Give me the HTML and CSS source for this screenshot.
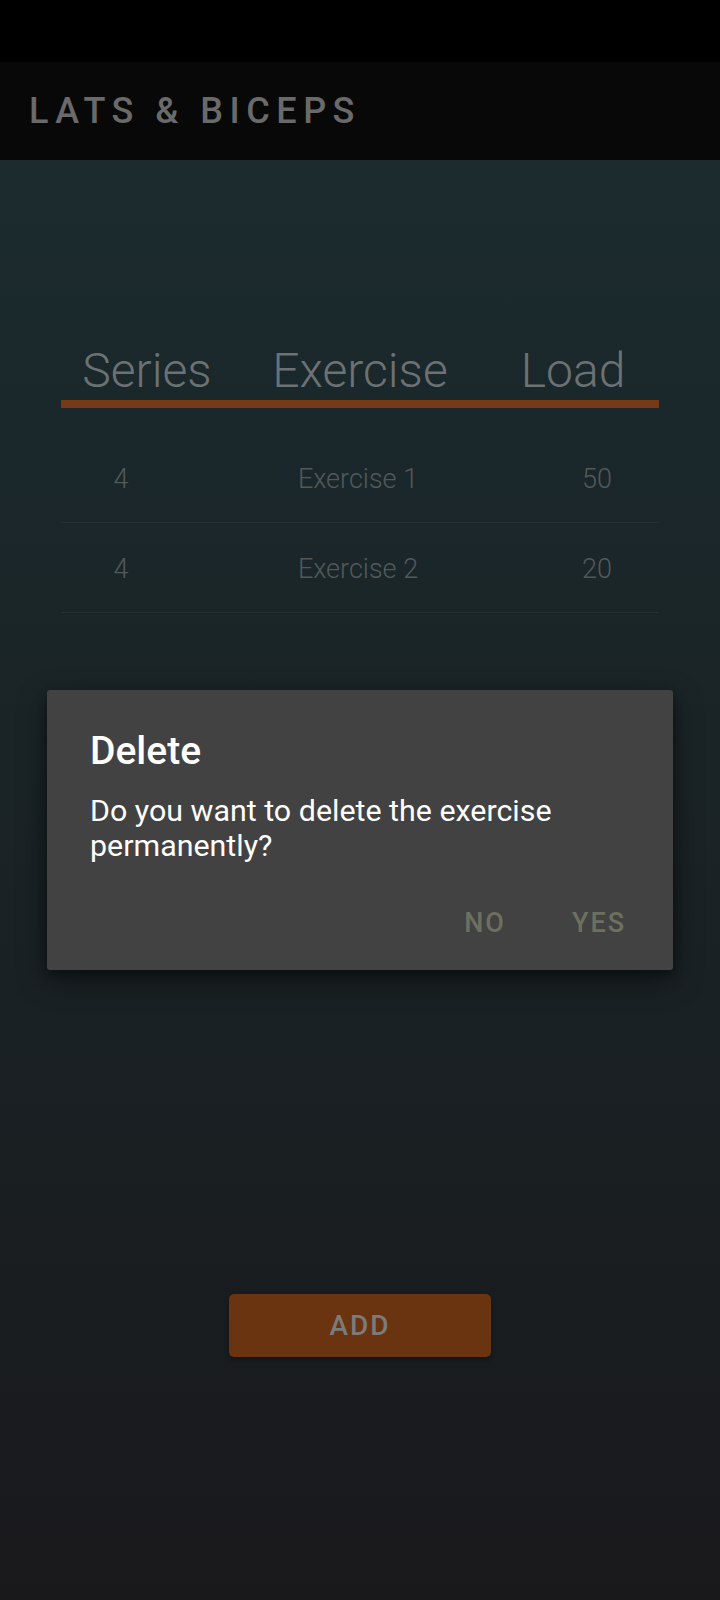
FILE: index.html
```html
<!DOCTYPE html>
<html lang="en">
<head>
<meta charset="utf-8">
<title>Lats &amp; Biceps</title>
<link rel="stylesheet" href="styles.css">
</head>
<body>
<div class="screen">
  <div class="status-bar"></div>
  <header class="app-bar">
    <h1 class="app-title">LATS &amp; BICEPS</h1>
  </header>
  <main class="content">
    <section class="table">
      <div class="table-head">
        <span>Series</span>
        <span>Exercise</span>
        <span>Load</span>
      </div>
      <div class="table-body">
        <div class="table-row">
          <span>4</span>
          <span>Exercise 1</span>
          <span>50</span>
        </div>
        <div class="table-row">
          <span>4</span>
          <span>Exercise 2</span>
          <span>20</span>
        </div>
      </div>
    </section>
    <div class="add-wrap">
      <button class="add-btn">ADD</button>
    </div>
  </main>

  <div class="dialog" role="dialog">
    <h2 class="dialog-title">Delete</h2>
    <p class="dialog-text">Do you want to delete the exercise permanently?</p>
    <div class="dialog-actions">
      <button class="dialog-btn">NO</button>
      <button class="dialog-btn">YES</button>
    </div>
  </div>
</div>
</body>
</html>
```

FILE: styles.css
```css
* {
  box-sizing: border-box;
}

html, body {
  margin: 0;
  padding: 0;
  background: #19191c;
}

body {
  font-family: Roboto, "Noto Sans", "Liberation Sans", sans-serif;
  width: 720px;
  height: 1600px;
  overflow: hidden;
}

.screen {
  position: relative;
  width: 720px;
  height: 1600px;
  display: flex;
  flex-direction: column;
}

.status-bar {
  height: 62px;
  background: #000000;
  flex: none;
}

.app-bar {
  height: 98px;
  background: #080808;
  display: flex;
  align-items: center;
  padding-left: 29px;
  flex: none;
}

.app-title {
  margin: 0;
  font-size: 36px;
  font-weight: 500;
  letter-spacing: 6.5px;
  color: #6a6a6a;
  line-height: 1;
}

.content {
  flex: 1;
  background: linear-gradient(180deg, #1b2b2e 0%, #1a2326 45%, #19191c 100%);
  display: flex;
  flex-direction: column;
  padding: 0 61px;
}

.table {
  margin-top: 183px;
}

.table-head {
  display: grid;
  grid-template-columns: 172px 254px 172px;
  border-bottom: 8px solid #773a17;
  font-weight: 300;
  font-size: 48px;
  line-height: 56px;
  color: #6c7173;
  padding-bottom: 1px;
}

.table-head span {
  text-align: center;
}

.table-body {
  margin-top: 25px;
}

.table-row {
  display: grid;
  grid-template-columns: 120px 354px 124px;
  height: 90px;
  align-items: center;
  border-bottom: 1px solid #223033;
  font-weight: 300;
  font-size: 27px;
  color: #52595b;
  padding-top: 3px;
}

.table-row span {
  text-align: center;
}

.add-wrap {
  display: flex;
  justify-content: center;
  margin-top: 681px;
}

.add-btn {
  width: 262px;
  height: 63px;
  border: none;
  border-radius: 5px;
  background: #69340f;
  color: #7b7b7b;
  font-family: Roboto, "Noto Sans", "Liberation Sans", sans-serif;
  font-size: 28px;
  font-weight: 500;
  letter-spacing: 2px;
  box-shadow: 0 2px 4px rgba(0, 0, 0, 0.35);
}

.dialog {
  position: absolute;
  left: 47px;
  top: 690px;
  width: 626px;
  height: 280px;
  background: #424242;
  border-radius: 3px;
  box-shadow: 0 10px 30px rgba(0, 0, 0, 0.45), 0 4px 10px rgba(0, 0, 0, 0.3);
  padding: 37px 41px 0 43px;
  display: flex;
  flex-direction: column;
}

.dialog-title {
  margin: 0;
  font-size: 39px;
  font-weight: 500;
  line-height: 48px;
  color: #ffffff;
}

.dialog-text {
  margin: 18px 0 0 0;
  font-size: 30.4px;
  line-height: 35px;
  color: #ffffff;
  font-weight: 400;
}

.dialog-actions {
  display: flex;
  justify-content: flex-end;
  gap: 66px;
  margin-top: 44px;
  padding-right: 6px;
}

.dialog-btn {
  border: none;
  background: none;
  padding: 0;
  font-family: Roboto, "Noto Sans", "Liberation Sans", sans-serif;
  font-size: 27px;
  font-weight: 500;
  letter-spacing: 2px;
  color: #6d705f;
  line-height: 32px;
}
```
